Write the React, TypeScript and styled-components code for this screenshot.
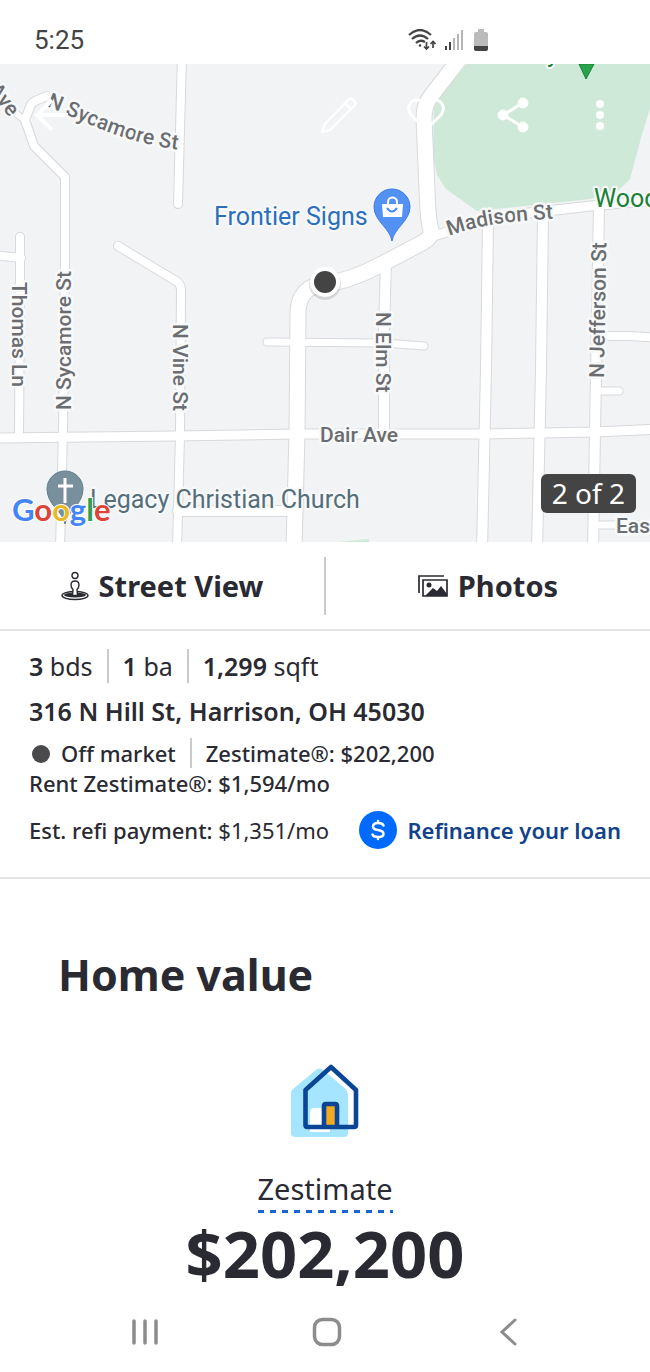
import React from "react";
import styled, { createGlobalStyle } from "styled-components";

const GlobalStyle = createGlobalStyle`
  *, *::before, *::after { box-sizing: border-box; }
  body {
    margin: 0;
    background: #fff;
    color: #2a2a33;
    font-family: "Noto Sans", "Open Sans", sans-serif;
  }
  button { font: inherit; color: inherit; background: none; border: 0; padding: 0; cursor: pointer; }
  h1, h2, p { margin: 0; }
  svg { display: block; }
`;

const Page = styled.div`
  display: flex;
  flex-direction: column;
  min-height: 100vh;
`;

/* Status bar */

const StatusBar = styled.header`
  display: flex;
  align-items: center;
  justify-content: space-between;
  height: 64px;
  padding: 16px 160px 0 34px;
  font-family: Roboto, sans-serif;
  font-size: 26px;
  line-height: 32px;
  color: #444;
`;

const StatusIcons = styled.div`
  display: flex;
  align-items: center;
  gap: 8px;
`;

/* Map */

const MapPanel = styled.section`
  position: relative;
  height: 478px;
  overflow: hidden;
  background: #f1f3f5;
`;

const MapDrawing = styled.svg`
  width: 100%;
  height: 100%;
`;

const MapToolbar = styled.div`
  position: absolute;
  inset: 24px 24px auto 24px;
  display: flex;
  justify-content: space-between;
`;

const ToolGroup = styled.div`
  display: flex;
  gap: 34px;
`;

const ToolButton = styled.button`
  display: grid;
  place-items: center;
  width: 53px;
  height: 53px;
`;

const PhotoCount = styled.span`
  position: absolute;
  right: 14px;
  bottom: 29px;
  padding: 0 11px;
  border-radius: 6px;
  background: #444;
  color: #fff;
  font-size: 28px;
  line-height: 39px;
`;

const RoadLabel = styled.text`
  font: 500 21px Roboto, sans-serif;
  fill: #6b6d70;
  stroke: #f8f9fa;
  stroke-width: 5px;
  stroke-linejoin: round;
  paint-order: stroke;
`;

const PlaceLabel = styled.text<{ $tone: string }>`
  font: 400 25px Roboto, sans-serif;
  fill: ${(p) => p.$tone};
  stroke: #f8f9fa;
  stroke-width: 4px;
  stroke-linejoin: round;
  paint-order: stroke;
`;

const LogoText = styled.text`
  font: 700 31px Lato, sans-serif;
  stroke: #fff;
  stroke-width: 2px;
  paint-order: stroke;
`;

/* View switcher */

const ViewTabs = styled.nav`
  display: flex;
  align-items: center;
  height: 89px;
  border-bottom: 2px solid #e4e4e6;
`;

const ViewTab = styled.button`
  flex: 1;
  display: flex;
  align-items: center;
  justify-content: center;
  gap: 10px;
  height: 58px;
  font-size: 29px;
  font-weight: 700;
  line-height: 36px;

  & + & { border-left: 2px solid #cacace; }
`;

/* Listing facts */

const Summary = styled.section`
  padding: 18px 29px 28px;
  border-bottom: 2px solid #e4e4e6;
`;

const Row = styled.div<{ $size: number; $height: number }>`
  display: flex;
  align-items: center;
  min-height: ${(p) => p.$height}px;
  font-size: ${(p) => p.$size}px;
  line-height: ${(p) => p.$height}px;
  font-weight: 500;
`;

const Strong = styled.span`
  font-weight: 600;
`;

const Light = styled.span`
  font-weight: 400;
`;

const Fact = styled.span`
  white-space: pre;

  & + & {
    margin-left: 14px;
    padding-left: 14px;
    border-left: 2px solid #cacace;
  }
`;

const Address = styled.h1`
  margin: 10px 0 9px;
  font-size: 25px;
  line-height: 36px;
  font-weight: 600;
`;

const StatusDot = styled.span`
  display: inline-block;
  width: 18px;
  height: 18px;
  margin: 0 11px 0 3px;
  border-radius: 50%;
  background: #4a4a4c;
  vertical-align: -1px;
`;

const RefiRow = styled(Row)`
  justify-content: space-between;
  margin-top: 13px;
`;

const RefinanceLink = styled.a`
  display: flex;
  align-items: center;
  gap: 10px;
  color: #11428a;
  font-weight: 600;
  text-decoration: none;
`;

/* Home value */

const HomeValue = styled.section`
  display: flex;
  flex-direction: column;
  align-items: center;
  padding-top: 64px;
`;

const SectionTitle = styled.h2`
  align-self: stretch;
  padding: 0 58px;
  font-size: 43px;
  line-height: 64px;
  font-weight: 700;
`;

const HouseIcon = styled.svg`
  margin-top: 57px;
`;

const ZestimateButton = styled.button`
  margin-top: 32px;
  padding-bottom: 5px;
  font-size: 29px;
  line-height: 38px;
  background: repeating-linear-gradient(90deg, #1766d0 0 6px, transparent 6px 12px) left bottom / 100% 3px no-repeat;
`;

const Price = styled.p`
  margin-top: 4px;
  font-size: 65px;
  line-height: 72px;
  font-weight: 700;
`;

/* System navigation */

const SystemNav = styled.nav`
  display: flex;
  align-items: center;
  justify-content: space-between;
  height: 81px;
  margin-top: auto;
  padding: 0 110px 0 113px;
  background: #fff;
`;

const NavButton = styled.button`
  display: grid;
  place-items: center;
  width: 64px;
  height: 64px;
`;

type Road = { d: string; w: number };

const roads: Road[] = [
  { d: "M47 96 L35 101 Q31 103 30 107 L25 120 L34 146 L65 177 L65 270 L63 432 L60 550", w: 8 },
  { d: "M0 100 L24 120", w: 6 },
  { d: "M182 56 L178 204", w: 8 },
  { d: "M20 237 V290 L19 437", w: 8 },
  { d: "M-6 255 L21 258", w: 8 },
  { d: "M118 246 L176 281 Q181 284 181 290 L180 435 L177 550", w: 8 },
  { d: "M-6 438 L175 436 L296 434 H484 L540 433 L595 432 L660 429", w: 9 },
  { d: "M178 511 H294", w: 10 },
  { d: "M462 56 L431 96 Q424 105 424 118 L427 190 Q428 222 431 230 Q432 238 420 244 L380 265 Q350 281 325 284 Q299 286 298 312 L297 433 L294 550", w: 15 },
  { d: "M267 342 L384 343 L424 346", w: 7 },
  { d: "M386 262 L384 330 V434", w: 10 },
  { d: "M424 239 Q450 230 520 214 L600 205 L660 200", w: 9 },
  { d: "M488 222 L486 370 L482 550", w: 10 },
  { d: "M543 214 L541 370 L537 550", w: 10 },
  { d: "M599 206 L595 432 L593 550", w: 10 },
  { d: "M598 336 H630 L660 338", w: 8 },
  { d: "M597 391 H619", w: 7 },
  { d: "M594 525 H660", w: 7 },
];

function StreetMap() {
  return (
    <MapDrawing viewBox="0 64 650 478" preserveAspectRatio="xMidYMid slice" role="img" aria-label="Map of 316 N Hill St">
      <path d="M467 64 L434 104 L433 155 L437 175 L446 189 L477 211 L590 199 L619 190 L630 179 L641 138 L650 108 V64 Z" fill="#cee9d7" />
      <path d="M339 542 L369 539 V542 Z" fill="#cee9d7" />
      <g fill="none" stroke="#d7d9dc" strokeLinecap="round" strokeLinejoin="round">
        {roads.map((r) => <path key={r.d} d={r.d} strokeWidth={r.w + 2} />)}
      </g>
      <g fill="none" stroke="#fff" strokeLinecap="round" strokeLinejoin="round">
        {roads.map((r) => <path key={r.d} d={r.d} strokeWidth={r.w} />)}
      </g>

      <defs>
        <path id="sycamore-curve" d="M46 106 C85 121 128 147 200 152" />
        <path id="madison-curve" d="M449 236 C482 224 510 221 565 218" />
      </defs>
      <RoadLabel><textPath href="#sycamore-curve">N Sycamore St</textPath></RoadLabel>
      <RoadLabel><textPath href="#madison-curve">Madison St</textPath></RoadLabel>
      <RoadLabel transform="translate(-12 90) rotate(52)">Ave</RoadLabel>
      <RoadLabel transform="translate(12 282) rotate(90)">Thomas Ln</RoadLabel>
      <RoadLabel transform="translate(71 410) rotate(-90)">N Sycamore St</RoadLabel>
      <RoadLabel transform="translate(173 324) rotate(90)">N Vine St</RoadLabel>
      <RoadLabel transform="translate(376 312) rotate(90)">N Elm St</RoadLabel>
      <RoadLabel transform="translate(604 378) rotate(-89)">N Jefferson St</RoadLabel>
      <RoadLabel x="320" y="442">Dair Ave</RoadLabel>
      <RoadLabel x="616" y="533">East</RoadLabel>

      <PlaceLabel x="214" y="225" $tone="#2b6fbd">Frontier Signs</PlaceLabel>
      <PlaceLabel x="594" y="207" $tone="#1b8038">Woodlawn</PlaceLabel>
      <PlaceLabel x="90" y="508" $tone="#546e7a">Legacy Christian Church</PlaceLabel>
      <PlaceLabel x="547" y="62" $tone="#1b8038">y</PlaceLabel>

      <path d="M579 64 H594 L586 79 Z" fill="#2ba24c" stroke="#188038" />

      <path d="M392 241 C390 228 374 221 374 207 A18 18 0 0 1 410 207 C410 221 394 228 392 241 Z" fill="#5491f5" stroke="#3f7de0" />
      <path d="M382 204 H403 L402 217 H383 Z" fill="#fff" />
      <path d="M388 205 V202 A4 4 0 0 1 397 202 V205" fill="none" stroke="#fff" strokeWidth="2" />
      <path d="M387 208 Q392 215 397 208" fill="none" stroke="#4285f4" strokeWidth="2" />

      <circle cx="325" cy="284" r="16" fill="#000" opacity="0.12" />
      <circle cx="325" cy="282" r="15" fill="#fff" />
      <circle cx="325" cy="282" r="11" fill="#444" />

      <path d="M65 524 C63 511 47 505 47 489 A18 18 0 0 1 83 489 C83 505 67 511 65 524 Z" fill="#78909c" stroke="#607d8b" />
      <path d="M65 478 V503 M58 486 H73" stroke="#fff" strokeWidth="3" />

      <LogoText x="12" y="521">
        <tspan fill="#4285f4">G</tspan>
        <tspan fill="#db4437">o</tspan>
        <tspan fill="#e8b926">o</tspan>
        <tspan fill="#4285f4">g</tspan>
        <tspan fill="#34a04f">l</tspan>
        <tspan fill="#db4437">e</tspan>
      </LogoText>
    </MapDrawing>
  );
}

export default function App() {
  return (
    <Page>
      <GlobalStyle />
      <StatusBar>
        <time>5:25</time>
        <StatusIcons>
          <svg width="28" height="22" viewBox="0 0 28 22" fill="none" stroke="#444" strokeWidth="2" aria-label="Wi-Fi">
            <path d="M1 6 Q12 -4 23 6 M4 10 Q12 3 20 10 M8 14 Q12 10 17 13" strokeWidth="2.3" />
            <circle cx="12" cy="16.500" r="1.300" fill="#444" stroke="none" />
            <path d="M18.500 13 V20 M16 17.500 L18.500 20 L21 17.500 M25 19 V12.500 M22.500 15 L25 12.500 L27.500 15" strokeWidth="1.700" />
          </svg>
          <svg width="20" height="22" viewBox="0 0 20 22" aria-label="Signal">
            <path d="M1 17 H3 V21 H1 Z M5 13 H7 V21 H5 Z" fill="#444" />
            <path d="M9 9 H11 V21 H9 Z M13 5 H15 V21 H13 Z M17 1 H19 V21 H17 Z" fill="#b5b5b5" />
          </svg>
          <svg width="18" height="22" viewBox="0 0 18 22" aria-label="Battery">
            <path d="M6 0 H12 V3 H14 Q16 3 16 5 V17 H2 V5 Q2 3 4 3 H6 Z" fill="#bbb" />
            <path d="M2 17 H16 V20 Q16 22 14 22 H4 Q2 22 2 20 Z" fill="#444" />
          </svg>
        </StatusIcons>
      </StatusBar>

      <MapPanel>
        <StreetMap />
        <MapToolbar>
          <ToolButton aria-label="Back">
            <svg width="36" height="34" viewBox="0 0 36 34" fill="none" stroke="#fff" strokeWidth="4">
              <path d="M35 17 H4 M19 2 L4 17 L19 32" />
            </svg>
          </ToolButton>
          <ToolGroup>
            <ToolButton aria-label="Edit">
              <svg width="38" height="38" viewBox="0 0 38 38" fill="none" stroke="#fff" strokeWidth="2.500" strokeLinejoin="round">
                <path d="M2 36 L5 28 L29 3 Q30 2 32 3 L35 6 Q36 8 35 9 L10 34 Z M25 7 L31 13" />
              </svg>
            </ToolButton>
            <ToolButton aria-label="Save">
              <svg width="38" height="34" viewBox="0 0 38 34" fill="none" stroke="#fff" strokeWidth="3">
                <path d="M19 31 L6 19 C-3 10 4 2 10 2 Q16 2 19 7 Q22 2 28 2 C34 2 41 10 32 19 Z" />
              </svg>
            </ToolButton>
            <ToolButton aria-label="Share">
              <svg width="32" height="36" viewBox="0 0 32 36" fill="#fff" stroke="#fff">
                <path d="M26 6 L6 18 L26 30" fill="none" strokeWidth="3" />
                <circle cx="26" cy="6" r="5" />
                <circle cx="6" cy="18" r="5" />
                <circle cx="26" cy="30" r="5" />
              </svg>
            </ToolButton>
            <ToolButton aria-label="More options">
              <svg width="8" height="30" viewBox="0 0 8 30" fill="#fff">
                <circle cx="4" cy="4" r="4" />
                <circle cx="4" cy="15" r="4" />
                <circle cx="4" cy="26" r="4" />
              </svg>
            </ToolButton>
          </ToolGroup>
        </MapToolbar>
        <PhotoCount>2 of 2</PhotoCount>
      </MapPanel>

      <ViewTabs>
        <ViewTab>
          <svg width="28" height="30" viewBox="0 0 28 30" fill="none" stroke="#2a2a33" strokeWidth="1.400">
            <ellipse cx="14" cy="24.500" rx="13" ry="4" fill="#fff" />
            <ellipse cx="14" cy="24" rx="11" ry="2.600" fill="#2a2a33" stroke="none" />
            <path d="M11.500 24.500 L12 18.500 Q10 16.500 10 14 Q10 10 14 10 Q18 10 18 14 Q18 16.500 16 18.500 L16.500 24.500 Z" fill="#fff" />
            <circle cx="14" cy="4.500" r="3" />
          </svg>
          Street View
        </ViewTab>
        <ViewTab>
          <svg width="30" height="24" viewBox="0 0 30 24" fill="none" stroke="#2a2a33" strokeWidth="1.700">
            <path d="M1 19 V2 H26" />
            <path d="M5 6 H29 V22 H5 Z" />
            <circle cx="11" cy="11" r="2.500" fill="#2a2a33" stroke="none" />
            <path d="M7 22 L15 14 L19 17 L23 12 L29 20 V22 Z" fill="#2a2a33" stroke="none" />
          </svg>
          Photos
        </ViewTab>
      </ViewTabs>

      <Summary>
        <Row $size={25} $height={34}>
          <Fact><Strong>3</Strong> <Light>bds</Light></Fact>
          <Fact><Strong>1</Strong> <Light>ba</Light></Fact>
          <Fact><Strong>1,299</Strong> <Light>sqft</Light></Fact>
        </Row>
        <Address>316 N Hill St, Harrison, OH 45030</Address>
        <Row $size={22} $height={30}>
          <Fact><StatusDot />Off market</Fact>
          <Fact>Zestimate®: $202,200</Fact>
        </Row>
        <Row $size={22} $height={30}>
          <Fact>Rent Zestimate®: $1,594/mo</Fact>
        </Row>
        <RefiRow $size={22} $height={38}>
          <Fact>Est. refi payment: <Light>$1,351/mo</Light></Fact>
          <RefinanceLink href="#refinance">
            <svg width="38" height="38" viewBox="0 0 38 38" fill="none" stroke="#fff" strokeWidth="2.500" strokeLinecap="round" aria-hidden="true">
              <circle cx="19" cy="19" r="19" fill="#006aff" stroke="none" />
              <path d="M24.500 14.500 Q23.500 12 19 12 Q14 12 14 15.500 Q14 18.300 19 19.100 Q24.500 20 24.500 23 Q24.500 26 19 26 Q14.500 26 13.500 23.500 M19 10 V12 M19 26 V28" />
            </svg>
            Refinance your loan
          </RefinanceLink>
        </RefiRow>
      </Summary>

      <HomeValue>
        <SectionTitle>Home value</SectionTitle>
        <HouseIcon width="68" height="74" viewBox="0 0 68 74" aria-hidden="true">
          <path d="M0 29 Q0 27 2 25 L25 6 Q28 3 32 6 L55 25 Q57 27 57 30 V69 Q57 73 53 73 H4 Q0 73 0 69 Z" fill="#a6e5ff" />
          <path d="M40 8 L63 29 V62 H57 V30 Q57 27 55 25 L36 9 Z" fill="#fff" />
          <path d="M19 68 V49 Q19 44 23 44 H34 V65 H39 V68 Z" fill="#fff" />
          <rect x="33" y="41" width="13" height="22" fill="#f2a922" />
          <path d="M14.500 26 L40 3 L65 26 V61 Q65 63 63 63 H16.500 Q14.500 63 14.500 61 Z M33 63 V42 Q33 40 35 40 H44 Q46 40 46 42 V63" fill="none" stroke="#0b4596" strokeWidth="4.600" strokeLinejoin="round" />
        </HouseIcon>
        <ZestimateButton>Zestimate</ZestimateButton>
        <Price>$202,200</Price>
      </HomeValue>

      <SystemNav>
        <NavButton aria-label="Recent apps">
          <svg width="28" height="28" viewBox="0 0 28 28" stroke="#8c8c8c" strokeWidth="3.500" strokeLinecap="round">
            <path d="M3 3 V25 M14 3 V25 M25 3 V25" />
          </svg>
        </NavButton>
        <NavButton aria-label="Home">
          <svg width="30" height="30" viewBox="0 0 30 30" fill="none" stroke="#8c8c8c" strokeWidth="3.500">
            <rect x="2.500" y="2.500" width="25" height="25" rx="8" />
          </svg>
        </NavButton>
        <NavButton aria-label="Back">
          <svg width="18" height="28" viewBox="0 0 18 28" fill="none" stroke="#8c8c8c" strokeWidth="3" strokeLinecap="round">
            <path d="M16 2 L3 14 L16 26" />
          </svg>
        </NavButton>
      </SystemNav>
    </Page>
  );
}
